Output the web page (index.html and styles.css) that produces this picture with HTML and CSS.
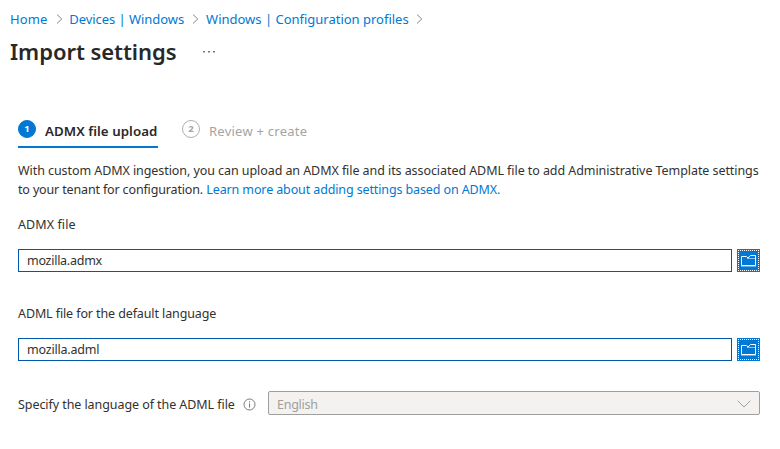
FILE: index.html
```html
<!DOCTYPE html>
<html lang="en">
<head>
<meta charset="utf-8">
<title>Import settings</title>
<link rel="stylesheet" href="styles.css">
</head>
<body>
<header class="header">
  <nav class="crumbs">
    <a class="c1">Home</a>
    <svg class="sep" viewBox="0 0 7 10"><path d="M1 .5 5.800 5 1 9.500"/></svg>
    <a class="c2">Devices | Windows</a>
    <svg class="sep" viewBox="0 0 7 10"><path d="M1 .5 5.800 5 1 9.500"/></svg>
    <a class="c3">Windows | Configuration profiles</a>
    <svg class="sep" viewBox="0 0 7 10"><path d="M1 .5 5.800 5 1 9.500"/></svg>
  </nav>
  <div class="title-row">
    <h1>Import settings</h1>
    <svg class="more" viewBox="0 0 12 2"><path d="M0 0h2v1.500H0zM5 0h2v1.500H5zM10 0h2v1.500h-2z"/></svg>
  </div>
</header>
<main class="main">
  <div class="tabs">
    <div class="tab active"><span class="num">1</span><span class="tab-label">ADMX file upload</span></div>
    <div class="tab"><span class="num">2</span><span class="tab-label">Review + create</span></div>
  </div>
  <p class="intro"><span class="line1">With custom ADMX ingestion, you can upload an ADMX file and its associated ADML file to add Administrative Template settings</span><br><span class="line2">to your tenant for configuration.</span> <a class="learn">Learn more about adding settings based on ADMX.</a></p>
  <div class="field">
    <div class="label l1">ADMX file</div>
    <div class="file-row">
      <div class="file-input"><span class="v1">mozilla.admx</span></div>
      <button class="browse"><svg viewBox="0 0 17 13"><path class="soft" d="M7 4.500h8M1 12.200h15"/><path d="M1.500 11.500v-9h5l1.500 1.500 2.500-2.500h5v10z"/></svg></button>
    </div>
  </div>
  <div class="field">
    <div class="label l2">ADML file for the default language</div>
    <div class="file-row">
      <div class="file-input"><span class="v2">mozilla.adml</span></div>
      <button class="browse"><svg viewBox="0 0 17 13"><path class="soft" d="M7 4.500h8M1 12.200h15"/><path d="M1.500 11.500v-9h5l1.500 1.500 2.500-2.500h5v10z"/></svg></button>
    </div>
  </div>
  <div class="lang-row">
    <div class="lang-label"><span class="l3">Specify the language of the ADML file</span>
      <svg class="info" viewBox="0 0 13 13"><circle cx="6.500" cy="6.500" r="5.500"/><path d="M6.500 5.500v4M6.500 3.300v1.200"/></svg>
    </div>
    <div class="select"><span class="v3">English</span><svg class="chev" viewBox="0 0 14 8"><path d="M.7.7 7 7 13.300.7"/></svg></div>
  </div>
</main>
</body>
</html>
```
FILE: styles.css
```css
* { box-sizing: border-box; }
body { margin: 0; background: #fff; color: #323130; font: 12.5px/19px "Noto Sans", "Open Sans", sans-serif; white-space: nowrap; overflow: hidden; }
a { color: #0078d4; }
.header { padding: 9px 10px 0; }
.crumbs { display: flex; align-items: center; height: 20px; }
.crumbs a { font-size: 13px; }
.crumbs a.c1 { width: 37.5px; letter-spacing: .15px; }
.crumbs a.c2 { width: 115px; letter-spacing: -.06px; }
.crumbs a.c3 { width: 202px; letter-spacing: -.01px; }
.sep { width: 7px; height: 10px; margin: 0 6.800px 0 8px; fill: none; stroke: #8a8886; }
.title-row { display: flex; align-items: center; height: 46px; gap: 26px; }
h1 { margin: -2px 0 0; width: 167px; font-size: 22px; line-height: 30px; font-weight: 600; letter-spacing: -.05px; color: #292827; }
.more { width: 12px; height: 2px; fill: #797775; }
.main { padding: 44px 20px 0 18px; }
.tabs { display: flex; gap: 24px; height: 29px; }
.tab { display: flex; gap: 9px; height: 29px; color: #a6a4a2; }
.num { width: 18px; height: 18px; margin-top: 1px; border: 1px solid #b3b0ad; border-radius: 50%; font-size: 9.5px; line-height: 15px; font-weight: 700; text-align: center; }
.tab-label { margin-top: 3px; font-size: 13px; letter-spacing: .25px; }
.active { width: 140px; border-bottom: 2px solid #0078d4; color: #292827; }
.active .num { background: #0078d4; border-color: #0078d4; color: #fff; }
.active .tab-label { font-size: 13.3px; font-weight: 600; letter-spacing: .05px; }
.intro { margin: 13px 0 16px; }
.line1 { letter-spacing: -.07px; }
.line2 { letter-spacing: -.15px; }
.learn { letter-spacing: -.12px; }
.label { height: 19px; }
.l1 { letter-spacing: .09px; }
.l2 { letter-spacing: -.11px; }
.v1 { letter-spacing: -.26px; }
.v2 { letter-spacing: -.2px; }
.file-row { display: flex; gap: 5px; margin-top: 15px; }
.file-input { flex: 1; height: 23px; border: 1px solid #0058ad; padding: 1px 8px; }
.browse { width: 23px; height: 23px; padding: 0; border: 1px solid #0078d4; background: #0078d4; outline: 1px dotted #fff; outline-offset: -2px; display: grid; place-items: center; }
.browse svg { width: 17px; height: 13px; fill: none; stroke: #fff; }
.browse .soft { stroke: #8fc4ee; }
.field + .field { margin-top: 32px; }
.lang-row { display: flex; margin-top: 30px; height: 24px; }
.lang-label { width: 250px; display: flex; align-items: center; padding-top: 3px; }
.lang-label .l3 { width: 225px; letter-spacing: -.07px; }
.info { width: 13px; height: 13px; fill: none; stroke: #797775; }
.select { flex: 1; display: flex; align-items: center; justify-content: space-between; background: #f3f2f1; border: 1px solid #a19f9d; border-radius: 2px; padding: 0 8px; color: #a19f9d; }
.select .v3 { padding-top: 2px; letter-spacing: -.26px; }
.chev { width: 14px; height: 8px; margin-top: 2px; fill: none; stroke: #a19f9d; }
```
